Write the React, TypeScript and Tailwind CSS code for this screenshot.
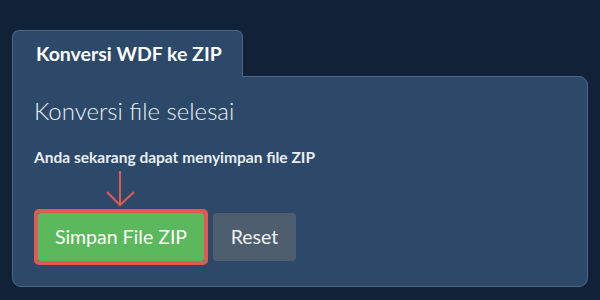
const App = () => {
  return (
    <div className="h-[300px] w-[600px] bg-[#112238] px-3 pt-[30px] font-['Lato',sans-serif]">
      <div className="relative z-10 -mb-px flex h-[47px] w-[231px] items-start rounded-t-[7px] border border-b-0 border-[#4b6888] bg-[#2c4969] pl-[23px] pt-[11px]">
        <span className="text-[19.5px] font-bold leading-[1.2] text-white">Konversi WDF ke ZIP</span>
      </div>
      <div className="h-[211px] w-[576px] rounded-b-[9px] rounded-tr-[9px] border border-[#4b6888] bg-[#2c4969] px-[21px] pt-[20px]">
        <h2 className="text-[24px] font-light leading-[1.2] text-[#e9eef4]">Konversi file selesai</h2>
        <p className="mt-[21px] text-[15.5px] font-bold leading-[20px] text-[#e9eef4]">
          Anda sekarang dapat menyimpan file ZIP
        </p>
        <svg
          className="ml-[72px] mt-[3px] block"
          width="30"
          height="38"
          viewBox="0 0 30 38"
          fill="none"
          stroke="#e05a55"
          strokeWidth="2"
        >
          <path d="M14 1V35" />
          <path d="M1 22L14 35L28 22" />
        </svg>
        <div className="mt-[1px] flex items-center gap-[5px]">
          <div className="rounded-[5px] border-[4px] border-[#e05a55]">
            <button className="flex h-[48px] w-[166px] items-center justify-center rounded-[2px] bg-[#5cb85c] text-[19.5px] text-white">
              Simpan File ZIP
            </button>
          </div>
          <button className="flex h-[48px] w-[83px] items-center justify-center rounded-[4px] bg-[#4e5e6e] text-[19.5px] text-[#eef1f4]">
            Reset
          </button>
        </div>
      </div>
    </div>
  );
};

export default App;
